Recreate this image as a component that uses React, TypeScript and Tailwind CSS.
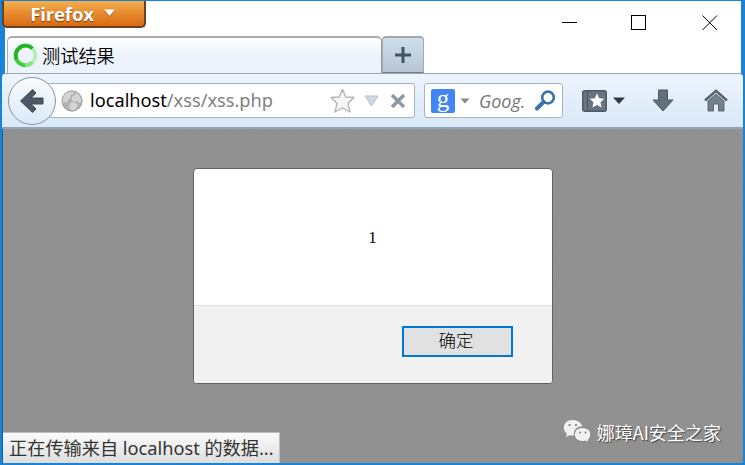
const ui = "font-['Noto_Sans','Noto_Sans_CJK_SC',sans-serif]";
const cjk = "font-['Noto_Sans_CJK_SC',sans-serif]";

function TitleBar() {
  return (
    <div className="flex h-[35px] items-start justify-between">
      <button className="-ml-[3px] flex h-[27px] w-[144px] items-start rounded-b-[5px] border-x-2 border-b-2 border-[#6b4020] bg-linear-to-b from-[#f5ae4f] via-[#e88a2c] to-[#d96a12] pl-[26px] font-['Open_Sans',sans-serif] text-[18.500px] leading-[26px] font-bold text-white [text-shadow:0_1px_1px_#75400f]">
        <span className="w-[64px] tracking-[-0.1px] whitespace-nowrap">Firefox</span>
        <svg className="mt-[8px] ml-[9px]" width="13" height="9" viewBox="0 0 13 9">
          <path d="M1 1.500h11L6.500 8z" fill="#a75312" />
          <path d="M1 .5h11L6.500 7z" fill="#fff" />
        </svg>
      </button>
      <div className="flex pt-[14px] pr-[23px]">
        <svg width="156" height="16" viewBox="0 0 156 16" fill="none" stroke="#000" shapeRendering="crispEdges">
          <path d="M0 7.500h15" />
          <path d="M69.500 .5h14v14h-14z" />
          <path d="M140.500 .5l14.500 14.500M155 .5L140.500 15" shapeRendering="auto" />
        </svg>
      </div>
    </div>
  );
}

function Tabs() {
  return (
    <div className="flex h-[37px] pl-[2px]">
      <div className="flex w-[375px] items-center rounded-t-[5px] border-x-[1.500px] border-t-2 border-[#aaacb0] border-r-[#999] bg-linear-to-b from-[#fdfeff] via-[#edf3fb] to-[#edf3fc] pl-[5px]">
        <svg width="25" height="25" viewBox="0 0 25 25" fill="none" strokeWidth="3.800">
          <circle cx="12.500" cy="12.500" r="9.800" stroke="#b5efb3" />
          <path d="M12.500 22.300A9.800 9.800 0 0 1 12.500 2.700" stroke="#3ccf37" />
          <path d="M3.500 16.400A9.800 9.800 0 0 1 19.400 5.500" stroke="#22b523" />
          <path d="M12.500 22.300a9.800 9.800 0 0 0 6.900-2.900" stroke="#84e481" />
        </svg>
        <span className={`${cjk} ml-[4px] text-[18.200px] leading-[34px] font-[350] text-black relative -top-px`}>测试结果</span>
      </div>
      <button className="flex w-[42px] items-center justify-center rounded-t-[4px] border-x border-t-2 border-b border-[#a5a9af] border-b-[#777d84] bg-linear-to-b from-[#cfdeeb] to-[#b7c6d6]">
        <svg width="16" height="16" viewBox="0 0 16 16" stroke="#46525f" strokeWidth="3">
          <path d="M0 8h16M8 0v16" />
        </svg>
      </button>
    </div>
  );
}

function Toolbar() {
  return (
    <div className="flex h-[56px] shrink-0 items-center rounded-t-[4px] border-t border-b-2 border-t-[#a0a6ad] border-b-[#91a6bb] bg-linear-to-b from-[#edf4fd] to-[#d9e8f7] pl-[6px]">
      <div className="z-10 flex size-[48px] shrink-0 items-center justify-center rounded-full border border-[#8197ad] bg-linear-to-b from-[#fafcff] to-[#dce9f7]">
        <svg className="-ml-[2px]" width="25" height="26" viewBox="0 0 25 26">
          <path d="M1.500 13L13.500 1.500l3.500 3.500-4.800 5H24v6H12.200l4.800 5-3.500 3.500z" fill="#4b5966" stroke="#3b4855" strokeLinejoin="round" strokeWidth="1" />
        </svg>
      </div>
      <div className="-ml-[12px] flex h-[35px] w-[371px] shrink-0 items-center rounded-r-[3px] border border-[#a3b4c7] bg-white pl-[16px]">
        <svg width="22" height="22" viewBox="0 0 22 22">
          <circle cx="11" cy="11" r="10.500" fill="#b2b2b2" />
          <path d="M3 5l4-3 6-.5-1 3-3 1 1 2-3 2-1 3-3-1-1 3-1-4zM15 2l4 4 1.500 5-2 2-3-2-2 1-3-2 1-4 3-1zM9 13l4-1 4 3-3 5-4 0-2-3z" fill="#d4d4d4" />
          <circle cx="11" cy="11" r="10" fill="none" stroke="#a8a8a8" strokeWidth="1" />
        </svg>
        <span className={`${ui} ml-[7px] w-[240px] text-[18.200px] leading-[33px] whitespace-nowrap text-black`}>
          localhost<span className="text-[#808080]">/xss/xss.php</span>
        </span>
        <svg width="26" height="26" viewBox="0 0 26 26">
          <path d="M12.500 1.500l3.300 7.500 8.200.5-6 5.800 2 8.700-7.500-4-7.500 4 2-8.700-6-5.800 8.200-.5z" fill="#f6f6f6" stroke="#b5b5b5" strokeWidth="1.400" strokeLinejoin="round" />
        </svg>
        <svg className="ml-[8px]" width="15" height="13" viewBox="0 0 15 13">
          <path d="M1 2h13L7.500 12z" fill="#ced9e3" stroke="#b4c1ce" />
        </svg>
        <svg className="ml-[12px]" width="14" height="14" viewBox="0 0 14 14" stroke="#8b98a7" strokeWidth="3.400">
          <path d="M1 1l12 12M13 1L1 13" />
        </svg>
      </div>
      <div className="ml-[9px] flex h-[35px] w-[139px] shrink-0 items-center rounded-[3px] border border-[#a3b4c7] bg-white pl-[6px]">
        <div className="flex size-[24px] items-center justify-center rounded-[2px] bg-[#4285f4] pb-[5px] font-['Liberation_Serif',serif] text-[25px] leading-none text-white">g</div>
        <svg className="ml-[5px]" width="10" height="6" viewBox="0 0 10 6">
          <path d="M.5.5h9L5 5.500z" fill="#888" />
        </svg>
        <span className="ml-[9px] w-[51px] font-['Open_Sans','Noto_Sans',sans-serif] text-[18px] leading-[32px] whitespace-nowrap text-[#757575] italic">Goog.</span>
        <svg className="ml-[5px]" width="21" height="21" viewBox="0 0 21 21" fill="none" stroke="#3975a8">
          <circle cx="13" cy="7.500" r="5.800" strokeWidth="2.700" />
          <path d="M8.500 12L2 18.500" strokeWidth="4" strokeLinecap="round" />
        </svg>
      </div>
      <svg className="ml-[19px] shrink-0" width="43" height="22" viewBox="0 0 43 22">
        <rect x=".7" y=".7" width="23.600" height="20.600" rx="2" fill="#667482" stroke="#4d5965" strokeWidth="1.400" />
        <path d="M5.500 1v20" stroke="#465360" />
        <path d="M15 3.500l2.200 4.700 5 .6-3.700 3.500 1 5.200-4.500-2.500-4.500 2.500 1-5.200-3.700-3.500 5-.6z" fill="#fff" />
        <path d="M31 7.500h12l-6 6.500z" fill="#303841" />
      </svg>
      <svg className="ml-[27px] shrink-0" width="22" height="23" viewBox="0 0 22 23">
        <path d="M6.500 1h9v10H21l-10 11L1 11h5.500z" fill="#61707e" stroke="#4c5966" strokeLinejoin="round" />
      </svg>
      <svg className="ml-[30px] shrink-0" width="24" height="23" viewBox="0 0 24 23">
        <path d="M4 12l8-7 8 7v10h-5.500v-7h-5v7H4z" fill="#74808c" stroke="#596774" />
        <path d="M1 11.500L12 1.800l11 9.700" fill="none" stroke="#53606d" strokeWidth="2.500" />
      </svg>
    </div>
  );
}

function AlertDialog() {
  return (
    <div className="flex h-[216px] w-[360px] flex-col overflow-hidden rounded-[4px] border border-[#616161] bg-white">
      <div className="flex h-[136px] items-center justify-center pt-[2px] font-['Liberation_Serif',serif] text-[17px] text-black">1</div>
      <div className="flex flex-1 items-start justify-end border-t border-[#dfdfdf] bg-[#f1f1f1] pt-[20px] pr-[39px]">
        <button className={`${cjk} flex h-[31px] w-[111px] items-center justify-center border-2 border-[#0078d7] bg-[#e1e1e1] pr-[2px] pb-[3px] text-[17.500px] leading-none font-light text-black`}>确定</button>
      </div>
    </div>
  );
}

function Watermark() {
  return (
    <div className="absolute right-[22px] bottom-[17px] flex items-center">
      <svg className="mr-[5px]" width="29" height="26" viewBox="0 0 29 26">
        <path d="M9.500 1C4.500 1 .8 4.300.8 8.700c0 2.400 1.200 4.500 3.200 6L3 18l3.700-1.800c1.500.4 3 .5 4.600.3-1.600-5 2-9.200 8-9.300C18 3.500 14.200 1 9.500 1z" fill="#f1f1f1" />
        <path d="M19.500 8.500c-4.700 0-8.200 3.200-8.200 7s3.500 7 8.200 7c1 0 2-.1 2.900-.4L26 24l-.9-3c1.700-1.300 2.700-3.300 2.700-5.500 0-3.800-3.600-7-8.300-7z" fill="#f1f1f1" stroke="#747474" strokeWidth=".8" />
        <g fill="#777"><circle cx="6.500" cy="6" r="1.100" /><circle cx="13" cy="6" r="1.100" /><circle cx="17" cy="13.500" r=".9" /><circle cx="22.500" cy="13.500" r=".9" /></g>
      </svg>
      <span className={`${cjk} text-[18px] leading-[28px] whitespace-nowrap text-white [text-shadow:1px_1px_1px_#444]`}>娜璋AI安全之家</span>
    </div>
  );
}

export default function App() {
  return (
    <div className="flex h-[465px] w-[745px] flex-col overflow-hidden border-t border-[#1883d7] bg-[#1883d7]">
      <div className="mr-[4px] ml-[5px] h-[72px] shrink-0 bg-white">
        <TitleBar />
        <Tabs />
      </div>
      <div className="mx-[2px] mb-[2px] flex min-h-0 flex-1 flex-col">
        <Toolbar />
        <main className="relative flex min-h-0 flex-1 justify-center border-l border-[#176298] bg-[#909090] bg-[repeating-linear-gradient(45deg,#8f8f8f_0px,#929292_2px,#8f8f8f_4px)] pt-[39px] pr-px">
          <div><AlertDialog /></div>
          <div className={`${ui} absolute bottom-0 left-0 h-[31px] w-[277px] border-t border-r border-[#bdbdbd] bg-linear-to-b from-[#fbfbfb] to-[#dedede] pl-[6px] text-[18.200px] leading-[31px] whitespace-nowrap text-[#333]`}>正在传输来自 localhost 的数据...</div>
          <Watermark />
        </main>
      </div>
    </div>
  );
}
